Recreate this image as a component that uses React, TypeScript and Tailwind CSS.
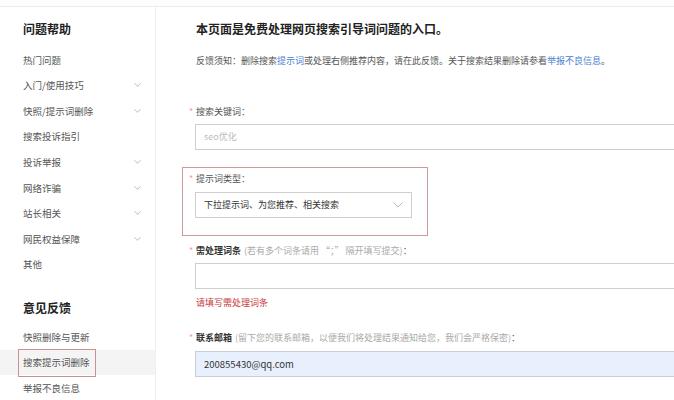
import React from "react";

const font = { fontFamily: '"Noto Sans CJK SC", "Noto Sans", sans-serif' };

function Chevron({ className }: { className?: string }) {
  return (
    <svg viewBox="0 0 10 6" className={className} fill="none" stroke="currentColor" strokeWidth="1">
      <path d="M0.5 0.5 L5 5 L9.5 0.5" />
    </svg>
  );
}

const helpItems: { label: string; arrow: boolean }[] = [
  { label: "热门问题", arrow: false },
  { label: "入门/使用技巧", arrow: true },
  { label: "快照/提示词删除", arrow: true },
  { label: "搜索投诉指引", arrow: false },
  { label: "投诉举报", arrow: true },
  { label: "网络诈骗", arrow: true },
  { label: "站长相关", arrow: true },
  { label: "网民权益保障", arrow: true },
  { label: "其他", arrow: false },
];

function Star() {
  return <span className="inline-block w-[7px] text-[#f29b9b] text-[9px]">*</span>;
}

export default function App() {
  return (
    <div className="w-[674px] h-[400px] overflow-hidden bg-white text-[#444]" style={font}>
      <div className="h-[7px] bg-[#fdfdfd] border-b border-[#ececec]" />
      <div className="flex h-[393px]">
        {/* Sidebar */}
        <div className="w-[156px] shrink-0 border-r border-[#efefef]">
          <div className="pl-[23px] mt-[15px] mb-[11px] h-[14px] leading-[14px] text-[12px] font-bold text-[#222]">
            问题帮助
          </div>
          {helpItems.map((it) => (
            <div key={it.label} className="h-[25.6px] flex items-center pl-[23px] pr-[14px] text-[9.5px] text-[#555]">
              <span className="flex-1">{it.label}</span>
              {it.arrow && <Chevron className="w-[7px] h-[4px] text-[#999]" />}
            </div>
          ))}
          <div className="pl-[23px] mt-[23.6px] mb-[9px] h-[14px] leading-[14px] text-[12px] font-bold text-[#222]">
            意见反馈
          </div>
          <div className="h-[25.6px] flex items-center pl-[23px] text-[9.5px] text-[#555]">快照删除与更新</div>
          <div className="relative h-[25.6px] flex items-center pl-[23px] text-[9.5px] text-[#555] bg-[#f4f4f4]">
            搜索提示词删除
            <div className="absolute left-[18px] top-[-1px] w-[78px] h-[28px] border border-[#c99292]" />
          </div>
          <div className="h-[25.6px] flex items-center pl-[23px] text-[9.5px] text-[#555]">举报不良信息</div>
        </div>

        {/* Main */}
        <div className="flex-1 overflow-hidden pl-[33px]">
          <div className="mt-[15px] ml-[7px] h-[14px] leading-[14px] text-[12px] font-bold text-[#222] whitespace-nowrap">
            本页面是免费处理网页搜索引导词问题的入口。
          </div>
          <div className="mt-[19px] ml-[7px] leading-[12px] text-[9px] text-[#555] whitespace-nowrap">
            反馈须知：删除搜索<span className="text-[#4a80d4]">提示词</span>或处理右侧推荐内容，请在此反馈。关于搜索结果删除请参看
            <span className="text-[#4a80d4]">举报不良信息</span>。
          </div>

          <div className="mt-[39px] leading-[12px] text-[9px] text-[#555] whitespace-nowrap flex items-center">
            <Star />
            搜索关键词：
          </div>
          <div className="mt-[6px] ml-[6px] w-[520px] h-[26px] border border-[#cfcfcf] flex items-center pl-[8px] text-[9px] text-[#bbb]">
            seo优化
          </div>

          <div className="mt-[17px] -ml-[7px] w-[246px] border border-[#cf9a9a] pl-[6px] pt-[5px] pb-[17px]">
            <div className="leading-[12px] text-[9px] text-[#555] whitespace-nowrap flex items-center">
              <Star />
              提示词类型：
            </div>
            <div className="mt-[7px] ml-[6px] w-[217px] h-[26px] border border-[#cfcfcf] flex items-center pl-[8px] pr-[8px] text-[9px] text-[#333]">
              <span className="flex-1">下拉提示词、为您推荐、相关搜索</span>
              <Chevron className="w-[10px] h-[6px] text-[#bbb]" />
            </div>
          </div>

          <div className="mt-[9px] leading-[12px] text-[9px] whitespace-nowrap flex items-center">
            <Star />
            <span className="font-bold text-[#333]">需处理词条</span>
            <span className="text-[#aaa] ml-[3px]">(若有多个词条请用 “；” 隔开填写提交)</span>
            <span className="text-[#555]">：</span>
          </div>
          <div className="mt-[6px] ml-[6px] w-[520px] h-[26px] border border-[#cfcfcf]" />
          <div className="mt-[8px] ml-[7px] leading-[12px] text-[9px] text-[#c83a3a]">请填写需处理词条</div>

          <div className="mt-[23px] leading-[12px] text-[9px] whitespace-nowrap flex items-center">
            <Star />
            <span className="font-bold text-[#333]">联系邮箱</span>
            <span className="text-[#aaa] ml-[3px]">(留下您的联系邮箱，以便我们将处理结果通知给您，我们会严格保密)</span>
            <span className="text-[#555]">：</span>
          </div>
          <div className="mt-[7px] ml-[6px] w-[520px] h-[26px] border border-[#c9ced6] bg-[#e8f0fe] flex items-center pl-[8px] text-[9.5px] text-[#333]">
            200855430@qq.com
          </div>
        </div>
      </div>
    </div>
  );
}
